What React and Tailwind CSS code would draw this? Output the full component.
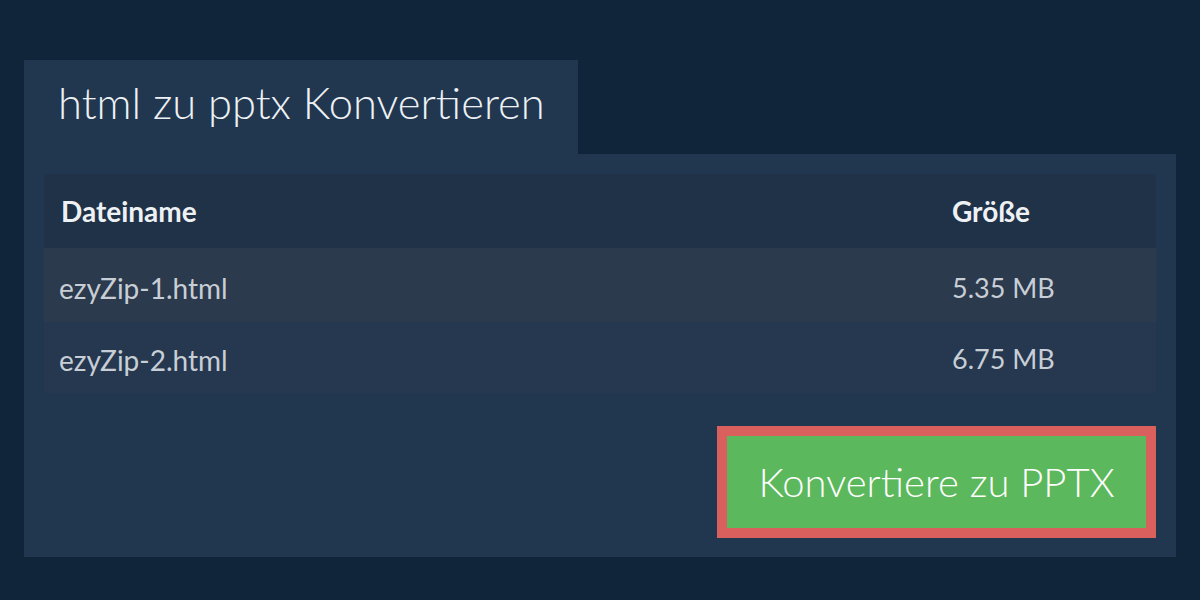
import React from 'react';

const FILES = [
  { name: 'ezyZip-1.html', size: '5.35 MB', row: 'h-[74px] pt-[6px] bg-[#2b3a4c]' },
  { name: 'ezyZip-2.html', size: '6.75 MB', row: 'h-[71px] pt-[4px] bg-[#25384f]' },
];

export default function App() {
  return (
    <div className="w-[1200px] h-[600px] bg-[#10243a] pt-[60px] px-6 font-['Lato','Liberation_Sans',sans-serif]">
      {/* tab */}
      <div className="w-[554px] h-[94px] bg-[#213750] flex items-center pl-[34px]">
        <h1 className="text-[43.5px] font-light text-[#eef1f4] leading-none -mt-[8px]">html zu pptx Konvertieren</h1>
      </div>

      {/* panel */}
      <div className="bg-[#213750] h-[403px] pt-5 px-5">
        <div className="w-full">
          <div className="flex h-[74px] items-center bg-[#1f3248] text-[28px] font-bold text-[#eef1f4]">
            <div className="flex-1 pl-[17px]">Dateiname</div>
            <div className="w-[204px]">Größe</div>
          </div>
          {FILES.map(f => (
            <div key={f.name} className={`flex items-center text-[#c8ced6] ${f.row}`}>
              <div className="flex-1 pl-[15px] text-[28px]">{f.name}</div>
              <div className="w-[204px] text-[27px]">{f.size}</div>
            </div>
          ))}
        </div>

        <div className="flex justify-end mt-[33px]">
          <button className="w-[439px] h-[112px] border-[10px] border-[#d9605c] bg-[#5cb85c] text-white text-[40px] font-light">
            Konvertiere zu PPTX
          </button>
        </div>
      </div>
    </div>
  );
}
